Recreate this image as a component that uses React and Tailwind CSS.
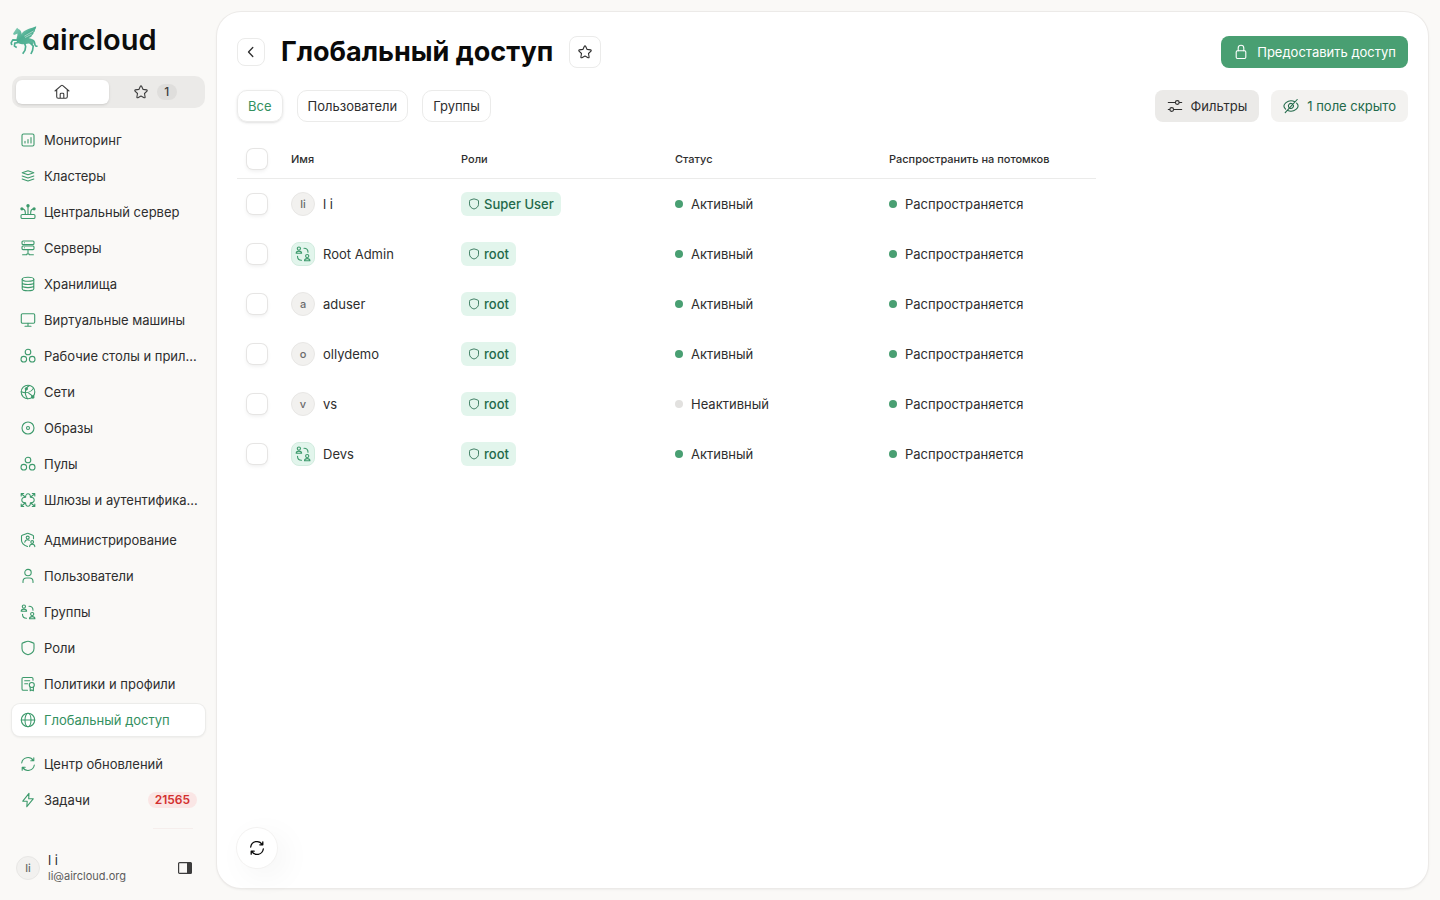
import React, { useState } from 'react';
import clsx from 'clsx';

// Base for the 16px outline icons
const Icon = ({ children, className = 'size-4', width = 1.1 }) => (
  <svg
    viewBox="0 0 16 16"
    fill="none"
    stroke="currentColor"
    strokeWidth={width}
    strokeLinecap="round"
    strokeLinejoin="round"
    className={clsx('shrink-0', className)}
    aria-hidden="true"
  >
    {children}
  </svg>
);

const HomeIcon = () => (
  <Icon>
    <path d="M1 7 7.2 1.6a1.2 1.2 0 0 1 1.6 0L15 7M2.7 5.6v7.2c0 .9.6 1.5 1.5 1.5h7.6c.9 0 1.5-.6 1.5-1.5V5.6M6.2 14.2v-4c0-.5.4-.9.9-.9h1.8c.5 0 .9.4.9.9v4" />
  </Icon>
);

const StarIcon = () => (
  <Icon>
    <path d="M7.4 2.2a.7.7 0 0 1 1.2 0l1.5 3.2 3.5.5c.6.1.8.8.4 1.2l-2.5 2.4.6 3.5c.1.6-.5 1-1 .7L8 12.1l-3.100 1.600c-.5.3-1.100-.1-1-.7l.6-3.500L2 7.100c-.4-.4-.2-1.100.4-1.200l3.500-.500z" />
  </Icon>
);

const ChartIcon = () => (
  <Icon>
    <rect x="2" y="2" width="12" height="12" rx="1.5" />
    <path d="M5 11V9.3M8 11V7.5M11 11V5.5" />
  </Icon>
);

const LayersIcon = () => (
  <Icon>
    <path d="M2.2 4.8 8 2.8l5.8 2L8 6.800zM2.2 8 8 10l5.8-2M2.2 11 8 13l5.8-2" />
  </Icon>
);

const HubIcon = () => (
  <Icon>
    <rect x="1" y="10.5" width="14" height="4" rx="1.3" />
    <path d="M8 10.500V2.500M5.300 10.500V8.200c0-1.700-1.200-3.200-3-3.500M10.700 10.500V8.200c0-1.700 1.200-3.200 3-3.500" />
    <g fill="currentColor" stroke="none">
      <circle cx="8" cy="1.8" r="1.7" />
      <circle cx="1.9" cy="4.800" r="1.6" />
      <circle cx="14.1" cy="4.800" r="1.6" />
    </g>
  </Icon>
);

const ServerIcon = () => (
  <Icon>
    <rect x="2" y="1" width="12" height="3.6" rx="1" />
    <rect x="2" y="6" width="12" height="3.6" rx="1" />
    <path d="M4.500 2.800h.01M4.500 7.800h.01M8 9.600v4.200M2.600 14.800h4M9.400 14.800h4M6.800 14h2.400" />
  </Icon>
);

const DatabaseIcon = () => (
  <Icon>
    <ellipse cx="8" cy="3.300" rx="5.800" ry="2" />
    <path d="M2.200 3.300v9.400c0 1.100 2.600 2 5.800 2s5.800-.9 5.800-2V3.300M2.200 6.500c0 1.100 2.600 2 5.800 2s5.800-.9 5.800-2M2.200 9.600c0 1.100 2.600 2 5.800 2s5.800-.9 5.800-2" />
  </Icon>
);

const MonitorIcon = () => (
  <Icon>
    <rect x="1.300" y="1.700" width="13.400" height="9.600" rx="1.200" />
    <path d="M8 11.300v2.700M5 14.200h6" />
  </Icon>
);

const PoolIcon = () => (
  <Icon>
    <circle cx="8" cy="4" r="2.800" />
    <circle cx="3.800" cy="11.2" r="2.800" />
    <circle cx="12.200" cy="11.2" r="2.800" />
  </Icon>
);

const NetworkIcon = () => (
  <Icon>
    <circle cx="8" cy="8" r="6.800" />
    <path d="M6.200 4.500C4.800 7.800 5.600 12 7.500 14.700M1.300 7.800c4.500 1.800 9.500.8 12.200-3.600M9.500 1.400C8.400 2 7.200 3 6.400 4.300M8.800 9.200c1.800.9 3.100 2.200 4 3.900" />
    <circle cx="6.300" cy="4.800" r="1.100" fill="currentColor" />
    <circle cx="12.800" cy="12.900" r="1.200" fill="currentColor" />
  </Icon>
);

const DiscIcon = () => (
  <Icon>
    <circle cx="8" cy="8" r="6" />
    <circle cx="8" cy="8" r="1.500" />
  </Icon>
);

const GatewayIcon = () => (
  <Icon>
    <path d="M1.2 1.8 5.600 5.200c0-2 1-3.400 2.400-3.400s2.400 1.400 2.400 3.400l4.400-3.400M1.200 14.200l4.400-3.400c0 2 1 3.400 2.400 3.400s2.400-1.400 2.400-3.400l4.400 3.400M5.600 5.200C3.300 5.200 1.800 6.500 1.800 8s1.500 2.800 3.800 2.800M10.400 5.200c2.300 0 3.800 1.300 3.800 2.800s-1.500 2.800-3.800 2.800M1.200 4V1.500h2.500M14.800 4V1.500h-2.500M1.200 12v2.500h2.500M14.800 12v2.500h-2.500" />
  </Icon>
);

const AdminIcon = () => (
  <Icon>
    <path d="M7.500 14.500c-3.300-1.200-6-3.100-6-6.300V4.300c0-.5.300-.9.700-1L7 1.400c.5-.2 1-.2 1.500 0l4.300 1.900c.4.100.7.500.7 1v2.500" />
    <circle cx="7.700" cy="5.600" r="1.500" />
    <path d="M4.800 10.300c.2-1.600 1.400-2.500 2.900-2.500.6 0 1.100.2 1.500.5" />
    <circle cx="12.200" cy="10" r="1.400" />
    <path d="M9.600 14.600c0-1.500 1.100-2.400 2.600-2.400s2.600.9 2.600 2.400" />
  </Icon>
);

const UserIcon = () => (
  <Icon>
    <circle cx="8" cy="4.600" r="3.200" />
    <path d="M3 14.500v-1c0-2.200 1.500-3.500 3.500-3.500h3c2 0 3.500 1.300 3.500 3.500v1" />
  </Icon>
);

const GroupIcon = ({ className }) => (
  <Icon className={className}>
    <circle cx="3.900" cy="2.600" r="1.600" />
    <path d="M1.200 7.200C1.200 5.800 2.400 5.100 3.900 5.100s2.700.7 2.700 2.100z" />
    <circle cx="12.200" cy="10.100" r="1.600" />
    <path d="M9.500 14.700c0-1.400 1.200-2.100 2.700-2.100s2.700.7 2.700 2.100zM9 2.300c2.300 0 4 1.700 4 4M2.500 10.200c0 2.300 1.700 4 4 4" />
  </Icon>
);

const ShieldIcon = ({ className }) => (
  <Icon className={className}>
    <path d="M2 4c0-.6.300-1 .8-1.100C4.500 2.500 6.200 1.200 8 1.200s3.500 1.300 5.200 1.700c.5.100.8.500.8 1.100v4.400c0 3.200-2.600 5.300-6 6.300-3.400-1-6-3.100-6-6.300z" />
  </Icon>
);

const PolicyIcon = () => (
  <Icon>
    <path d="M7.500 14.300H3.300c-.8 0-1.300-.5-1.300-1.300V2.800c0-.8.500-1.300 1.300-1.300h8.400c.8 0 1.300.5 1.300 1.300v1.500M4.700 4.700h5M4.700 7.700h3" />
    <circle cx="11.800" cy="9" r="2.500" />
    <path d="M10.200 11v3.800l1.600-.9 1.600.9V11" />
  </Icon>
);

const GlobeIcon = () => (
  <Icon>
    <circle cx="8" cy="8" r="6.700" />
    <ellipse cx="8" cy="8" rx="3" ry="6.700" />
    <path d="M1.300 8h13.400" />
  </Icon>
);

const RefreshIcon = ({ width }) => (
  <Icon width={width}>
    <path d="M1.700 7A6.300 6.300 0 0 1 13.300 4.600M14.300 9A6.300 6.300 0 0 1 2.700 11.400M13.800 1.800v3h-3M2.200 14.200v-3h3" />
  </Icon>
);

const BoltIcon = () => (
  <Icon>
    <path d="M9 1.300 2.800 9.200h4.400L6.800 14.700l6.400-7.900H8.700z" />
  </Icon>
);

const LockIcon = () => (
  <Icon>
    <rect x="3.200" y="6.800" width="9.600" height="7.700" rx="1.200" />
    <path d="M5.200 6.800V4c0-1.600 1.200-2.800 2.800-2.800s2.800 1.200 2.800 2.800v2.800" />
  </Icon>
);

const SlidersIcon = () => (
  <Icon>
    <path d="M1.300 4.500h7M12.300 4.500h2.400M1.300 11.500h1.400M6.700 11.500h8" />
    <circle cx="10.300" cy="4.500" r="1.900" />
    <circle cx="4.700" cy="11.500" r="1.900" />
  </Icon>
);

const EyeOffIcon = () => (
  <Icon>
    <path d="M2.600 11.200C1.600 10.200.9 9 .9 8c0-2 3.200-5.200 7.100-5.200 1.400 0 2.700.4 3.800 1M13.600 5.200C14.600 6.100 15.100 7.200 15.100 8c0 2-3.200 5.200-7.100 5.200-1.200 0-2.300-.3-3.300-.7M5.700 9.200a2.600 2.600 0 0 1 3.500-3.500M10.400 7.200a2.600 2.600 0 0 1-3.200 3.200M14.200 1.500 2.200 14.700" />
  </Icon>
);

const Logo = () => (
  <a href="#home" className="flex items-center gap-1 pl-2.5 text-[#0c0d0d]">
    <svg viewBox="0 0 84 88" className="h-[29px] w-7 shrink-0" aria-hidden="true">
      <defs>
        <linearGradient id="horse" x1="0" y1="0" x2="1" y2="1">
          <stop offset="0" stopColor="#8ccfba" />
          <stop offset=".5" stopColor="#4cae91" />
          <stop offset="1" stopColor="#62b79c" />
        </linearGradient>
      </defs>
      {/* wing */}
      <path
        fill="url(#horse)"
        d="M33 35C31 22 42 14 55 9 64 6 71 5 79 1c0 5-1 8-4 11 1 3-1 6-4 8 1 4-2 6-5 8 0 3-3 6-7 7-1 3-4 5-9 5z"
      />
      {/* head, neck and body */}
      <path
        fill="url(#horse)"
        d="M21 5l4 4c6 2 9 8 10 15 1 6 4 10 10 12 8 2 19 1 24 6 4 4 3 9 1 13-4 3-9 0-14-2-7 0-13 4-20 2-9 0-17-4-17-13 0-6 4-12 3-19l-6 3-5 1-2-4 7-11z"
      />
      {/* legs and tail */}
      <path
        fill="none"
        stroke="#4cae91"
        strokeWidth="5"
        strokeLinejoin="round"
        d="M24 43 8 42 3 51l2 7M25 50l-11 2-1 9 7 4M44 53l3 9-2 12-7 10M62 52l8 9-2 13-5 11M67 43c7 1 7 8 8 13 1 5 4 6 8 5"
      />
      <path stroke="#faf9f7" strokeWidth="1.5" fill="none" d="M43 31l28-16M45 35l20-10" />
    </svg>
    <span className="text-[29px] leading-8 font-semibold [font-feature-settings:'cv11']">aircloud</span>
  </a>
);

const NAV = [
  [
    { label: 'Мониторинг', icon: ChartIcon },
    { label: 'Кластеры', icon: LayersIcon },
    { label: 'Центральный сервер', icon: HubIcon },
    { label: 'Серверы', icon: ServerIcon },
    { label: 'Хранилища', icon: DatabaseIcon },
    { label: 'Виртуальные машины', icon: MonitorIcon },
    { label: 'Рабочие столы и прил…', icon: PoolIcon },
    { label: 'Сети', icon: NetworkIcon },
    { label: 'Образы', icon: DiscIcon },
    { label: 'Пулы', icon: PoolIcon },
    { label: 'Шлюзы и аутентифика…', icon: GatewayIcon },
  ],
  [
    { label: 'Администрирование', icon: AdminIcon },
    { label: 'Пользователи', icon: UserIcon },
    { label: 'Группы', icon: GroupIcon },
    { label: 'Роли', icon: ShieldIcon },
    { label: 'Политики и профили', icon: PolicyIcon },
    { label: 'Глобальный доступ', icon: GlobeIcon, active: true },
  ],
  [
    { label: 'Центр обновлений', icon: RefreshIcon },
    { label: 'Задачи', icon: BoltIcon, badge: '21565' },
  ],
];

const ROWS = [
  { name: 'l i', initials: 'li', role: 'Super User', active: true },
  { name: 'Root Admin', group: true, role: 'root', active: true },
  { name: 'aduser', initials: 'a', role: 'root', active: true },
  { name: 'ollydemo', initials: 'o', role: 'root', active: true },
  { name: 'vs', initials: 'v', role: 'root', active: false },
  { name: 'Devs', group: true, role: 'root', active: true },
];

const NavItem = ({ label, icon: ItemIcon, active, badge }) => (
  <li>
    <a
      href="#nav"
      aria-current={active ? 'page' : undefined}
      className={clsx(
        'flex h-8 items-center gap-2 rounded-lg px-2 whitespace-nowrap',
        active
          ? 'bg-white text-[#34905f] shadow-[0_0_0_1px_#ececea,0_1px_3px_rgba(0,0,0,0.1)]'
          : 'text-[#2e2e2e]'
      )}
    >
      <span className="text-[#3d9a6c]"><ItemIcon /></span>
      {label}
      {badge && (
        <span className="ml-auto rounded-full bg-[#fae6e5] px-[7px] text-xs leading-4 font-semibold text-[#d3302f]">
          {badge}
        </span>
      )}
    </a>
  </li>
);

const Avatar = ({ children }) => (
  <span className="flex size-6 shrink-0 items-center justify-center rounded-full border border-[#e8e7e5] bg-[#f2f1ef] text-[11px] font-medium text-[#6b6b6b]">
    {children}
  </span>
);

const Sidebar = () => (
  <aside className="flex w-[217px] shrink-0 flex-col pt-6 pb-4">
    <Logo />

    {/* Home / favourites */}
    <div className="mx-3 mt-5 flex h-8 items-center rounded-[10px] bg-[#ebeae8] px-1 text-[#3d3d3d]">
      <button aria-label="Главная" className="flex h-6 flex-1 items-center justify-center rounded-md bg-white shadow-sm">
        <HomeIcon />
      </button>
      <button className="flex h-6 flex-1 items-center justify-center gap-2">
        <StarIcon />
        <span className="flex h-4 w-5 items-center justify-center rounded-full bg-[#dfdedc] text-xs font-medium">1</span>
      </button>
    </div>

    <nav className="mx-3 mt-4 flex flex-col">
      {NAV.map((items, i) => (
        <ul key={i} className={clsx('flex flex-col gap-1', i === 1 && 'mt-2', i === 2 && 'mt-3')}>
          {items.map((item) => (
            <NavItem key={item.label} {...item} />
          ))}
        </ul>
      ))}
    </nav>
    <hr className="mt-3 mr-6 ml-auto w-10 border-[#f5eeec]" />

    {/* Current user */}
    <div className="mt-auto flex items-center gap-2 pr-6 pl-4">
      <Avatar>li</Avatar>
      <div className="min-w-0 flex-1">
        <div className="leading-4 text-[#2e2e2e]">l i</div>
        <div className="text-[11px] leading-4 text-[#5c5c5c]">li@aircloud.org</div>
      </div>
      <button aria-label="Свернуть меню" className="text-[#3d3d3d]">
        <svg viewBox="0 0 16 16" className="size-4" aria-hidden="true">
          <rect x="1.600" y="2.600" width="12.800" height="10.800" rx="1" fill="none" stroke="currentColor" strokeWidth="1.200" />
          <path d="M10 2.500h3.500c.6 0 1 .4 1 1v9c0 .6-.4 1-1 1H10z" fill="currentColor" />
        </svg>
      </button>
    </div>
  </aside>
);

const Checkbox = ({ label }) => (
  <input
    type="checkbox"
    aria-label={label}
    className="block size-5 appearance-none rounded-[6px] bg-white shadow-[0_0_0_1px_#e6e5e4,0_2px_4px_rgba(0,0,0,0.08)] checked:bg-[#499f72]"
  />
);

const Dot = ({ on = true }) => (
  <span className={clsx('size-2 shrink-0 rounded-full', on ? 'bg-[#499f72]' : 'bg-[#e2e1df]')} />
);

const COLUMNS = ['Имя', 'Роли', 'Статус', 'Распространить на потомков'];

const AccessTable = ({ rows }) => (
  <table className="mt-[17px] w-[859px] table-fixed border-separate border-spacing-0 text-left">
    <colgroup>
      <col className="w-11" />
      <col className="w-[170px]" />
      <col className="w-[214px]" />
      <col className="w-[214px]" />
      <col />
    </colgroup>
    <thead>
      <tr className="h-10 text-[11px]">
        <th className="border-b border-[#ebebea] pl-2.5"><Checkbox label="Выбрать все" /></th>
        {COLUMNS.map((name) => (
          <th key={name} className="border-b border-[#ebebea] px-2.5 font-medium text-[#2e2e2e]">{name}</th>
        ))}
      </tr>
    </thead>
    <tbody>
      {rows.map((row) => (
        <tr key={row.name} className="h-[50px]">
          <td className="pl-2.5"><Checkbox label={row.name} /></td>
          <td className="px-2.5">
            <div className="flex items-center gap-2">
              {row.group ? (
                <span className="flex size-6 items-center justify-center rounded-lg border border-[#d2ecdf] bg-[#e2f5ec] text-[#3d9a6c]">
                  <GroupIcon className="size-4" />
                </span>
              ) : (
                <Avatar>{row.initials}</Avatar>
              )}
              {row.name}
            </div>
          </td>
          <td className="px-2.5">
            <div className="flex">
              <span className="flex h-6 items-center gap-1 rounded-md bg-[#e2f5ec] px-[7px] font-medium text-[#22694a]">
                <ShieldIcon className="size-3" />
                {row.role}
              </span>
            </div>
          </td>
          <td className="px-2.5">
            <div className="flex items-center gap-2">
              <Dot on={row.active} />
              {row.active ? 'Активный' : 'Неактивный'}
            </div>
          </td>
          <td className="px-2.5">
            <div className="flex items-center gap-2">
              <Dot />
              Распространяется
            </div>
          </td>
        </tr>
      ))}
    </tbody>
  </table>
);

const TABS = ['Все', 'Пользователи', 'Группы'];

const App = () => {
  const [tab, setTab] = useState('Все');

  const rows = ROWS.filter((row) => {
    if (tab === 'Группы') return row.group;
    if (tab === 'Пользователи') return !row.group;
    return true;
  });

  return (
    <div className="flex min-h-screen bg-[#faf9f7] font-['Inter','Liberation_Sans',sans-serif] text-[13px] leading-5 text-[#2e2e2e]">
      <Sidebar />

      <main className="relative my-3 mr-3 min-w-0 flex-1 rounded-3xl bg-white px-5 pt-6 shadow-[0_0_0_1px_#eceae8,0_1px_3px_rgba(0,0,0,0.1)]">
        {/* Page header */}
        <header className="flex items-center">
          <button aria-label="Назад" className="flex size-7 items-center justify-center rounded-lg border border-[#ebebea]">
            <Icon width={1.3}>
              <path d="M9.800 3.500 5.500 8l4.300 4.500" />
            </Icon>
          </button>
          <h1 className="ml-4 text-[27px] leading-8 font-bold text-[#0a0a0a]">Глобальный доступ</h1>
          <button aria-label="В избранное" className="ml-4 flex size-8 items-center justify-center rounded-lg border border-[#ebebea]">
            <StarIcon />
          </button>
          <button className="ml-auto flex h-8 items-center gap-2 rounded-lg bg-[#499f72] px-3 text-white">
            <LockIcon />
            Предоставить доступ
          </button>
        </header>

        {/* Filters */}
        <div className="mt-[22px] flex items-center justify-between">
          <div className="flex gap-3.5">
            {TABS.map((name) => (
              <button
                key={name}
                onClick={() => setTab(name)}
                className={clsx(
                  'h-8 rounded-[10px] border border-[#ebebea] px-2.5',
                  tab === name && 'text-[#34905f] shadow-sm'
                )}
              >
                {name}
              </button>
            ))}
          </div>
          <div className="flex gap-3">
            <button className="flex h-8 items-center gap-2 rounded-lg bg-[#ebeae8] px-3">
              <SlidersIcon />
              Фильтры
            </button>
            <button className="flex h-8 items-center gap-2 rounded-lg bg-[#f3f2f0] px-3 text-[#22694a]">
              <EyeOffIcon />
              1 поле скрыто
            </button>
          </div>
        </div>

        <AccessTable rows={rows} />

        <button
          aria-label="Обновить"
          className="absolute bottom-5 left-5 flex size-10 items-center justify-center rounded-full bg-white text-[#0a0a0a] shadow-[0_0_0_1px_#f3f2f1,8px_8px_32px_rgba(0,0,0,0.05)]"
        >
          <RefreshIcon width={1.3} />
        </button>
      </main>
    </div>
  );
};

export default App;
